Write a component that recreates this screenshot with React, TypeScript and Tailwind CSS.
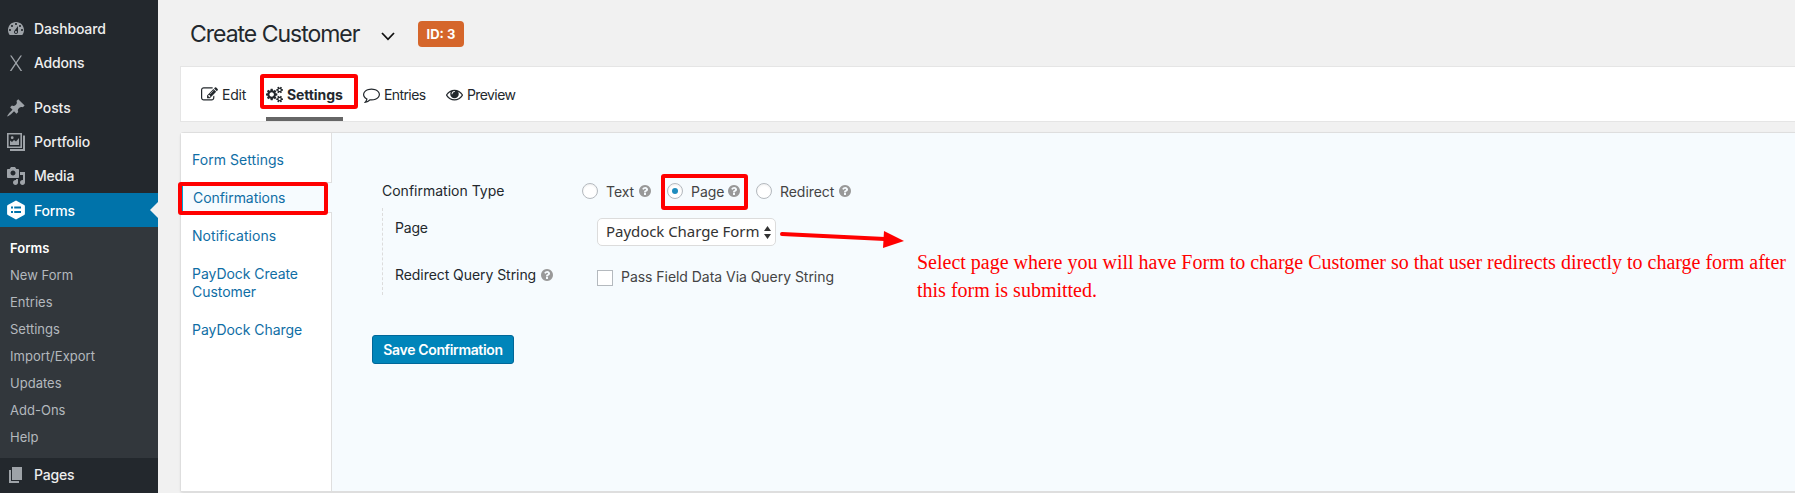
import React from "react";

const ICONS = {
  edit: "M888 1184l116-116-152-152-116 116v56h96v96h56zm440-720q-16-16-33 1l-350 350q-17 17-1 33t33-1l350-350q17-17 1-33zm80 594v190q0 119-84.5 203.5t-203.5 84.5h-832q-119 0-203.5-84.5t-84.5-203.5v-832q0-119 84.5-203.5t203.5-84.5h832q63 0 117 25 15 7 18 23 3 17-9 29l-49 49q-14 14-32 8-23-6-45-6h-832q-66 0-113 47t-47 113v832q0 66 47 113t113 47h832q66 0 113-47t47-113v-126q0-13 9-22l64-64q15-15 35-7t20 29zm-96-738l288 288-672 672h-288v-288zm444 132l-92 92-288-288 92-92q28-28 68-28t68 28l152 152q28 28 28 68t-28 68z",
  eye: "M1664 960q-152-236-381-353 61 104 61 225 0 185-131.5 316.5t-316.5 131.5-316.5-131.5-131.5-316.5q0-121 61-225-229 117-381 353 133 205 333.5 326.5t434.5 121.5 434.5-121.5 333.5-326.5zm-720-384q0-20-14-34t-34-14q-125 0-214.5 89.5t-89.5 214.5q0 20 14 34t34 14 34-14 14-34q0-86 61-147t147-61q20 0 34-14t14-34zm848 384q0 34-20 69-140 230-376.5 368.5t-499.5 138.5-499.5-139-376.5-368q-20-35-20-69t20-69q140-229 376.5-368t499.5-139 499.5 139 376.5 368q20 35 20 69z",
  comment: "M896 384q-204 0-381.5 69.5t-282 187.5-104.5 255q0 112 71.5 213.5t201.5 175.5l87 50-27 96q-24 91-70 172 152-63 275-171l43-38 57 6q69 8 130 8 204 0 381.5-69.5t282-187.5 104.5-255-104.5-255-282-187.5-381.5-69.5zm896 512q0 174-120 321.5t-326 233-450 85.5q-70 0-145-8-198 175-460 242-49 14-114 22h-5q-15 0-27-10.5t-16-27.5v-1q-3-4-.5-12t2-10 4.5-9.5l6-9 7-8.5 8-9q7-8 31-34.5t34.5-38 31-39.5 32.5-51 27-59 26-76q-157-89-247.5-220t-90.5-281q0-130 71-248.5t191-204.5 286-136.5 348-50.5 348 50.5 286 136.5 191 204.5 71 248.5z",
  cogs: "M896 896q0-106-75-181t-181-75-181 75-75 181 75 181 181 75 181-75 75-181zm768 512q0-52-38-90t-90-38-90 38-38 90q0 53 37.5 90.5t90.5 37.5 90.5-37.5 37.5-90.5zm0-1024q0-52-38-90t-90-38-90 38-38 90q0 53 37.5 90.5t90.5 37.5 90.5-37.5 37.5-90.5zm-384 421v185q0 10-7 19.5t-16 10.5l-155 24q-11 35-32 76 34 48 90 115 7 11 7 20 0 12-7 19-23 30-82.5 89.5t-78.5 59.5q-11 0-21-7l-115-90q-37 19-77 31-11 108-23 155-7 24-30 24h-186q-11 0-20-7.5t-10-17.5l-23-153q-34-10-75-31l-118 89q-7 7-20 7-11 0-21-8-144-133-144-160 0-9 7-19 10-14 41-53t47-61q-23-44-35-82l-152-24q-10-1-17-9.5t-7-19.5v-185q0-10 7-19.5t16-10.5l155-24q11-35 32-76-34-48-90-115-7-11-7-20 0-12 7-20 22-30 82-89t79-59q11 0 21 7l115 90q34-18 77-32 11-108 23-154 7-24 30-24h186q11 0 20 7.5t10 17.5l23 153q34 10 75 31l118-89q8-7 20-7 11 0 21 8 144 133 144 160 0 8-7 19-12 16-42 54t-45 60q23 48 34 82l152 23q10 2 17 10.5t7 19.5zm640 533v140q0 16-149 31-12 27-30 52 51 113 51 138 0 4-4 7-122 71-124 71-8 0-46-47t-52-68q-20 2-30 2t-30-2q-14 21-52 68t-46 47q-2 0-124-71-4-3-4-7 0-25 51-138-18-25-30-52-149-15-149-31v-140q0-16 149-31 13-29 30-52-51-113-51-138 0-4 4-7 4-2 35-20t59-34 30-16q8 0 46 46.5t52 67.5q20-2 30-2t30 2q51-71 92-112l6-2q4 0 124 70 4 3 4 7 0 25-51 138 17 23 30 52 149 15 149 31zm0-1024v140q0 16-149 31-12 27-30 52 51 113 51 138 0 4-4 7-122 71-124 71-8 0-46-47t-52-68q-20 2-30 2t-30-2q-14 21-52 68t-46 47q-2 0-124-71-4-3-4-7 0-25 51-138-18-25-30-52-149-15-149-31v-140q0-16 149-31 13-29 30-52-51-113-51-138 0-4 4-7 4-2 35-20t59-34 30-16q8 0 46 46.5t52 67.5q20-2 30-2t30 2q51-71 92-112l6-2q4 0 124 70 4 3 4 7 0 25-51 138 17 23 30 52 149 15 149 31z",
  help: "M1024 1376v-192q0-14-9-23t-23-9h-192q-14 0-23 9t-9 23v192q0 14 9 23t23 9h192q14 0 23-9t9-23zm256-672q0-88-55.5-163t-138.5-116-170-41q-243 0-371 213-15 24 8 42l132 100q7 6 19 6 16 0 25-12 53-68 86-92 34-24 86-24 48 0 85.5 26t37.5 59q0 38-20 61t-68 45q-63 28-115.5 86.5t-52.5 125.5v36q0 14 9 23t23 9h192q14 0 23-9t9-23q0-19 21.5-49.5t54.5-49.5q32-18 49-28.5t46-35 44.5-48 28-60.5 12.5-81zm384 192q0 209-103 385.5t-279.5 279.5-385.5 103-385.5-103-279.5-279.5-103-385.5 103-385.5 279.5-279.5 385.5-103 385.5 103 279.5 279.5 103 385.5z",
  dashboard: "M3.76 16h12.48c1.1-1.37 1.76-3.11 1.76-5 0-4.42-3.58-8-8-8s-8 3.58-8 8c0 1.89.66 3.63 1.76 5zM10 4c.55 0 1 .45 1 1s-.45 1-1 1-1-.45-1-1 .45-1 1-1zM6 6c.55 0 1 .45 1 1s-.45 1-1 1-1-.45-1-1 .45-1 1-1zm8 0c.55 0 1 .45 1 1s-.45 1-1 1-1-.45-1-1 .45-1 1-1zm-5.37 5.55L12 7v6c0 1.1-.9 2-2 2s-2-.9-2-2c0-.57.24-1.08.63-1.45zM4 10c.55 0 1 .45 1 1s-.45 1-1 1-1-.45-1-1 .45-1 1-1zm12 0c.55 0 1 .45 1 1s-.45 1-1 1-1-.45-1-1 .45-1 1-1zm-5 3c0-.55-.45-1-1-1s-1 .45-1 1 .45 1 1 1 1-.45 1-1z",
  pin: "M10.44 3.02l1.82-1.82 6.36 6.35-1.83 1.82c-1.05-.68-2.48-.57-3.41.36l-.75.75c-.92.93-1.04 2.35-.35 3.41l-1.83 1.82-2.41-2.41-2.8 2.79c-.42.42-3.38 2.71-3.8 2.29s1.86-3.39 2.28-3.81l2.79-2.79L4.1 9.36l1.83-1.82c1.05.69 2.48.57 3.4-.36l.75-.75c.93-.92 1.05-2.35.36-3.41z",
  media: "M13 11V4c0-.55-.45-1-1-1h-1.67L9 1H5L3.67 3H2c-.55 0-1 .45-1 1v7c0 .55.45 1 1 1h10c.55 0 1-.45 1-1zM7 4.5c1.38 0 2.5 1.12 2.5 2.5S8.38 9.5 7 9.5 4.5 8.38 4.5 7 5.62 4.5 7 4.5zM14 6h5v10.5c0 1.38-1.12 2.5-2.5 2.5S14 17.88 14 16.5s1.12-2.5 2.5-2.5c.17 0 .34.02.5.05V9h-3V6zm-4 8.05V13h2v3.5c0 1.38-1.12 2.5-2.5 2.5S7 17.88 7 16.5 8.12 14 9.5 14c.17 0 .34.02.5.05z",
  portfolio: "M1 1h15v15H1zM2.600 2.600v11.800h11.800V2.600zM17 3.500h2V19H4v-2h13zM4 13V8.500l2 1.500 2-2 2 1.500L13 6v7zM6.200 4.300a1.400 1.400 0 1 1 0 2.800 1.400 1.400 0 0 1 0-2.800z",
  pages: "M6 15V2h10v13H6zm-1 1h8v2H3V5h2v11z",
  addons: "M4 2.500h1.600L10 8.900l4.400-6.400H16l-5.200 7.600L16.200 18h-1.600L10 11.300 5.400 18H3.800l5.400-7.900z",
  forms: "M10 .4l8.200 4.700c.5.3.7.6.7 1.200v7.400c0 .6-.2.9-.7 1.200L10 19.600l-8.200-4.700c-.5-.3-.7-.6-.7-1.200V6.300c0-.6.2-.9.7-1.200zM5 6.500v2h2v-2zM8.200 6.500v2h6.800v-2zM5 11v2h2v-2zM8.200 11v2h6.800v-2z",
};

function Dash({ d }: { d: string }) {
  return (
    <svg viewBox="0 0 20 20" className="h-5 w-5 shrink-0" fill="currentColor" fillRule="evenodd">
      <path d={d} />
    </svg>
  );
}

function MenuItem({ icon, label, track }: { icon: string; label: string; track: string }) {
  return (
    <div className="flex h-[34px] items-center gap-2 pl-1.5 text-[#9ea3a8]">
      <Dash d={icon} />
      <span className={"pb-px text-[14px] font-medium text-[#eee] " + track}>{label}</span>
    </div>
  );
}

function Help() {
  return (
    <svg viewBox="128 128 1536 1536" className="h-3 w-3 shrink-0 text-[#999]" fill="currentColor">
      <path d={ICONS.help} />
    </svg>
  );
}

function Tab({ icon, box, label, className }: { icon: string; box: string; label: string; className: string }) {
  return (
    <div className={"flex h-full items-center gap-1 border-b-4 pt-1 text-[14px] text-[#23282d] " + className}>
      <svg viewBox={box} className="h-[17px] w-[17px] shrink-0" fill="currentColor">
        <path d={icon} />
      </svg>
      <span className="whitespace-nowrap">{label}</span>
    </div>
  );
}

function Radio({ label, checked, className }: { label: string; checked?: boolean; className: string }) {
  return (
    <div className={"flex shrink-0 items-center " + className}>
      <span className="mr-2 flex h-4 w-4 shrink-0 items-center justify-center rounded-full border border-[#b4b9be] bg-white shadow-[inset_0_1px_2px_rgba(0,0,0,0.07)]">
        {checked && <span className="h-1.5 w-1.5 rounded-full bg-[#1e8cbe]" />}
      </span>
      <span className="mr-1 flex-1 whitespace-nowrap tracking-[-0.05px] text-[#444]">{label}</span>
      <Help />
    </div>
  );
}

const SUBMENU = ["New Form", "Entries", "Settings", "Import/Export", "Updates", "Add-Ons", "Help"];

export default function App() {
  return (
    <div className="relative flex h-[493px] w-[1795px] overflow-hidden bg-[#f1f1f1] font-['Inter',sans-serif] text-[14px]">
      <aside className="flex w-[158px] shrink-0 flex-col bg-[#23282d] pt-3">
        <MenuItem icon={ICONS.dashboard} label="Dashboard" track="tracking-[-0.15px]" />
        <MenuItem icon={ICONS.addons} label="Addons" track="tracking-[-0.2px]" />
        <div className="h-[11px]" />
        <MenuItem icon={ICONS.pin} label="Posts" track="tracking-[-0.1px]" />
        <MenuItem icon={ICONS.portfolio} label="Portfolio" track="tracking-[0px]" />
        <MenuItem icon={ICONS.media} label="Media" track="tracking-[-0.2px]" />
        <div className="flex h-[34px] items-center bg-[#0073aa] pl-1.5 text-white">
          <Dash d={ICONS.forms} />
          <span className="ml-2 flex-1 text-[14px] font-medium tracking-[-0.2px]">Forms</span>
          <svg viewBox="0 0 8 16" className="h-4 w-2" fill="#f1f1f1">
            <path d="M8 0v16L0 8z" />
          </svg>
        </div>
        <div className="h-[231px] bg-[#32373c] pt-2 pl-2.5 text-[13px] leading-[27px] text-[#b4b9be]">
          <div className="font-semibold text-white">Forms</div>
          {SUBMENU.map((s) => (
            <div key={s} className="tracking-[0.02px]">{s}</div>
          ))}
        </div>
        <MenuItem icon={ICONS.pages} label="Pages" track="tracking-[-0.2px]" />
      </aside>

      <main className="flex w-[1637px] flex-col pl-[22px]">
        <header className="flex h-[66px] items-center pl-2.5 pt-0.5">
          <h1 className="w-[191px] whitespace-nowrap text-[23px] tracking-[-1.02px] text-[#23282d]">Create Customer</h1>
          <svg viewBox="0 0 14 9" className="mt-1 h-[9px] w-3.5" fill="none" stroke="#111" strokeWidth="1.8">
            <path d="M1 1l6 6.300L13 1" />
          </svg>
          <span className="ml-[23px] flex h-[26px] w-[46px] items-center justify-center rounded-sm bg-[#d5662b] pt-px text-[13px] font-bold text-white">
            ID: 3
          </span>
        </header>

        <nav className="flex h-[56px] border border-r-0 border-[#e5e5e5] bg-white pl-5">
          <Tab icon={ICONS.edit} box="0 0 1792 1792" label="Edit" className="w-[65px] tracking-[-0.25px] border-transparent" />
          <Tab icon={ICONS.cogs} box="0 0 1920 1792" label="Settings" className="mr-[20px] w-[77px] tracking-[-0.1px] border-[#666] font-bold" />
          <Tab icon={ICONS.comment} box="0 0 1792 1792" label="Entries" className="w-[83px] tracking-[-0.6px] border-transparent" />
          <Tab icon={ICONS.eye} box="0 0 1792 1792" label="Preview" className="tracking-[-0.6px] border-transparent" />
        </nav>

        <section className="mt-2.5 flex h-[361px] rounded-l-sm border border-b-2 border-r-0 border-[#dedede] shadow-[0_1px_2px_rgba(0,0,0,0.08)]">
          <div className="flex w-[151px] shrink-0 flex-col bg-white text-[14px] leading-[18px] text-[#0f6ea5]">
            <div className="h-[49px] border-r border-[#dfdfdf] pl-[11px] pt-[18px] tracking-[0.05px]">Form Settings</div>
            <div className="h-[31px] border-y border-l-2 border-y-[#dfdfdf] border-l-[#00a0d2] bg-[#f6fbfe] pl-2.5 pt-[6px] tracking-[-0.05px]">Confirmations</div>
            <div className="flex-1 border-r border-[#dfdfdf] pl-[11px] pt-[14px] tracking-[-0.05px]">
              <div className="tracking-[0.05px]">Notifications</div>
              <div className="mt-5">PayDock Create<br />Customer</div>
              <div className="mt-5">PayDock Charge</div>
            </div>
          </div>

          <div className="flex flex-1 flex-col bg-[#f6fbfe] pl-[40px] pt-[47px] text-[#23282d]">
            <div className="flex h-[22px] items-center pl-[10px]">
              <div className="w-[200px] pb-0.5">Confirmation Type</div>
              <Radio label="Text" className="mr-4 w-[69px]" />
              <Radio label="Page" checked className="mr-4 w-[73px]" />
              <Radio label="Redirect" className="w-[95px]" />
            </div>
            <div className="ml-[10px] mt-[6px] flex h-[87px] flex-col border-l border-dashed border-[#dcdcdc] pl-3">
              <div className="flex h-[40px] items-start pt-[10px]">
                <div className="w-[202px] tracking-[-0.2px] leading-[19px]">Page</div>
                <div className="flex h-[28px] w-[179px] items-center justify-between rounded-[5px] border border-[#dcdcdc] bg-white pl-2 pr-1 font-['Noto_Sans',sans-serif] text-[15px] text-[#333]">
                  <span className="whitespace-nowrap pb-px tracking-[-0.05px]">Paydock Charge Form</span>
                  <svg viewBox="0 0 7 13" className="h-[13px] w-[7px] shrink-0" fill="#333">
                    <path d="M3.500 0L7 5H0zM3.500 13L0 8h7z" />
                  </svg>
                </div>
              </div>
              <div className="flex h-[47px] items-start pt-[17px]">
                <div className="flex w-[202px] items-center gap-[5px]">
                  <span className="whitespace-nowrap leading-[20px] tracking-[-0.06px]">Redirect Query String</span>
                  <Help />
                </div>
                <span className="mr-2 mt-[5px] h-4 w-4 border border-[#b4b9be] bg-white" />
                <span className="pt-0.5 leading-[20px] tracking-[-0.04px] text-[#444]">Pass Field Data Via Query String</span>
              </div>
            </div>
            <button className="mt-[40px] h-[29px] w-[142px] whitespace-nowrap rounded-[3px] border border-[#006799] bg-[#0085ba] text-[14px] font-semibold tracking-[-0.35px] text-white">
              Save Confirmation
            </button>
          </div>
        </section>
      </main>

      <div className="absolute left-[260px] top-[74px] h-[35px] w-[98px] rounded-[3px] border-4 border-[#f00]" />
      <div className="absolute left-[178px] top-[182px] h-[33px] w-[150px] rounded-[3px] border-4 border-[#f00]" />
      <div className="absolute left-[661px] top-[174px] h-[36px] w-[87px] rounded-[3px] border-4 border-[#f00]" />
      <svg viewBox="0 0 126 20" className="absolute left-[779px] top-[229px] h-5 w-[126px]" fill="#f00">
        <path d="M3 5L106 10" stroke="#f00" strokeWidth="4" strokeLinecap="round" />
        <path d="M105 2l20 10-21 7z" />
      </svg>
      <p className="absolute left-[917px] top-[248px] whitespace-nowrap font-['Liberation_Serif',serif] text-[20px] leading-[28px] text-[#f00]">
        Select page where you will have Form to charge Customer so that user redirects directly to charge form after
        <br />
        this form is submitted.
      </p>
    </div>
  );
}
